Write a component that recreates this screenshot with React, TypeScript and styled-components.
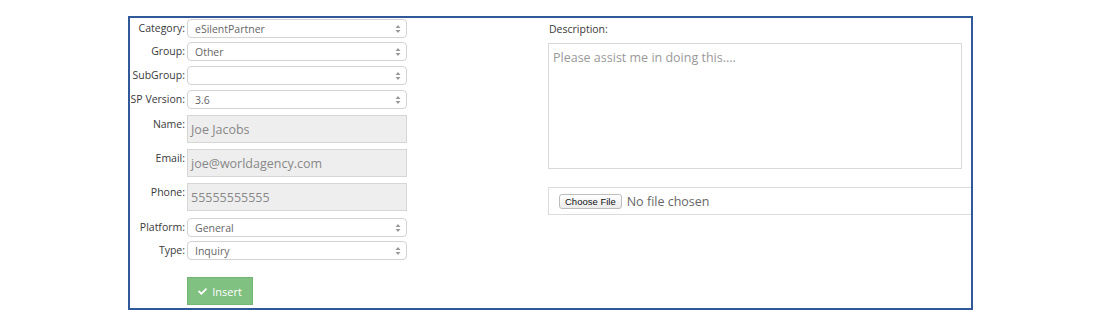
import styled, { createGlobalStyle } from "styled-components";
import { FaCheck } from "react-icons/fa";

const GlobalStyle = createGlobalStyle`
    body {
        margin: 0;
        background: #fff;
        font-family: "Open Sans", "Liberation Sans", sans-serif;
        color: #333;
    }
`;

const Frame = styled.div`
    box-sizing: border-box;
    margin: 16px 0 0 128px;
    width: 845px;
    height: 294px;
    border: 2px solid #30599a;
    display: flex;
    overflow: hidden;
`;

const LeftCol = styled.div`
    width: 418px;
    padding-top: 1px;
    display: flex;
    flex-direction: column;
`;

const RightCol = styled.div`
    flex: 1;
    padding-top: 4px;
    display: flex;
    flex-direction: column;
`;

const Row = styled.div<{ $gap: number }>`
    display: grid;
    grid-template-columns: 55px 220px;
    column-gap: 2px;
    margin-bottom: ${p => p.$gap}px;
`;

const Label = styled.label`
    font-size: 10.5px;
    line-height: 19px;
    text-align: right;
    white-space: nowrap;
    color: #3a3a3a;
`;

const SelectBox = styled.div`
    box-sizing: border-box;
    height: 19px;
    border: 1px solid #d3d3d3;
    border-radius: 4px;
    background: #fff;
    display: flex;
    align-items: center;
    justify-content: space-between;
    padding: 0 5px 0 7px;
    font-size: 10.5px;
    color: #666;
`;

const TextBox = styled.div`
    box-sizing: border-box;
    height: 28px;
    border: 1px solid #d6d6d6;
    background: #eee;
    display: flex;
    align-items: center;
    padding: 1px 3px 0;
    font-size: 12.5px;
    color: #888;
`;

const InsertButton = styled.button`
    margin-left: 57px;
    margin-top: -1px;
    width: 66px;
    height: 28px;
    box-sizing: border-box;
    border: 1px solid #74b574;
    background: #80c080;
    color: #fff;
    font-family: inherit;
    font-size: 11px;
    display: flex;
    align-items: center;
    justify-content: center;
    gap: 5px;
    padding: 0;
    svg {
        width: 9px;
        height: 9px;
    }
`;

const DescLabel = styled.div`
    font-size: 10.5px;
    line-height: 15px;
    padding-left: 1px;
    margin-bottom: 6px;
    color: #3a3a3a;
`;

const TextArea = styled.div`
    box-sizing: border-box;
    width: 414px;
    height: 126px;
    border: 1px solid #d9d9d9;
    padding: 5px 4px;
    font-size: 12.5px;
    color: #999;
`;

const FileBox = styled.div`
    box-sizing: border-box;
    margin-top: 18px;
    height: 28px;
    border: 1px solid #dcdcdc;
    border-right: none;
    display: flex;
    align-items: center;
    padding-left: 10px;
    gap: 5px;
`;

const ChooseButton = styled.span`
    box-sizing: border-box;
    height: 15px;
    padding: 0 5px;
    border: 1px solid #bdbdbd;
    border-radius: 3px;
    background: linear-gradient(#fff, #ececec);
    font-family: "Liberation Sans", Arial, sans-serif;
    font-size: 9.5px;
    line-height: 13px;
    color: #111;
`;

const NoFile = styled.span`
    font-size: 12.5px;
    color: #666;
`;

const Arrows = () => (
    <svg width="6" height="10" viewBox="0 0 6 10">
        <path d="M3 1 L5.5 4 H0.5 Z" fill="#999" />
        <path d="M3 9 L5.5 6 H0.5 Z" fill="#999" />
    </svg>
);

const selects = [
    { label: "Category:", value: "eSilentPartner", gap: 4 },
    { label: "Group:", value: "Other", gap: 5 },
    { label: "SubGroup:", value: "", gap: 5 },
    { label: "SP Version:", value: "3.6", gap: 6 },
];

const texts = [
    { label: "Name:", value: "Joe Jacobs" },
    { label: "Email:", value: "joe@worldagency.com" },
    { label: "Phone:", value: "55555555555" },
];

const lower = [
    { label: "Platform:", value: "General", gap: 4 },
    { label: "Type:", value: "Inquiry", gap: 18 },
];

export default function App() {
    return (
        <>
            <GlobalStyle />
            <Frame>
                <LeftCol>
                    {selects.map(s => (
                        <Row key={s.label} $gap={s.gap}>
                            <Label>{s.label}</Label>
                            <SelectBox>
                                <span>{s.value}</span>
                                <Arrows />
                            </SelectBox>
                        </Row>
                    ))}
                    {texts.map((t, i) => (
                        <Row key={t.label} $gap={i === texts.length - 1 ? 7 : 6}>
                            <Label>{t.label}</Label>
                            <TextBox>{t.value}</TextBox>
                        </Row>
                    ))}
                    {lower.map(s => (
                        <Row key={s.label} $gap={s.gap}>
                            <Label>{s.label}</Label>
                            <SelectBox>
                                <span>{s.value}</span>
                                <Arrows />
                            </SelectBox>
                        </Row>
                    ))}
                    <InsertButton>
                        <FaCheck />
                        Insert
                    </InsertButton>
                </LeftCol>
                <RightCol>
                    <DescLabel>Description:</DescLabel>
                    <TextArea>Please assist me in doing this....</TextArea>
                    <FileBox>
                        <ChooseButton>Choose File</ChooseButton>
                        <NoFile>No file chosen</NoFile>
                    </FileBox>
                </RightCol>
            </Frame>
        </>
    );
}
